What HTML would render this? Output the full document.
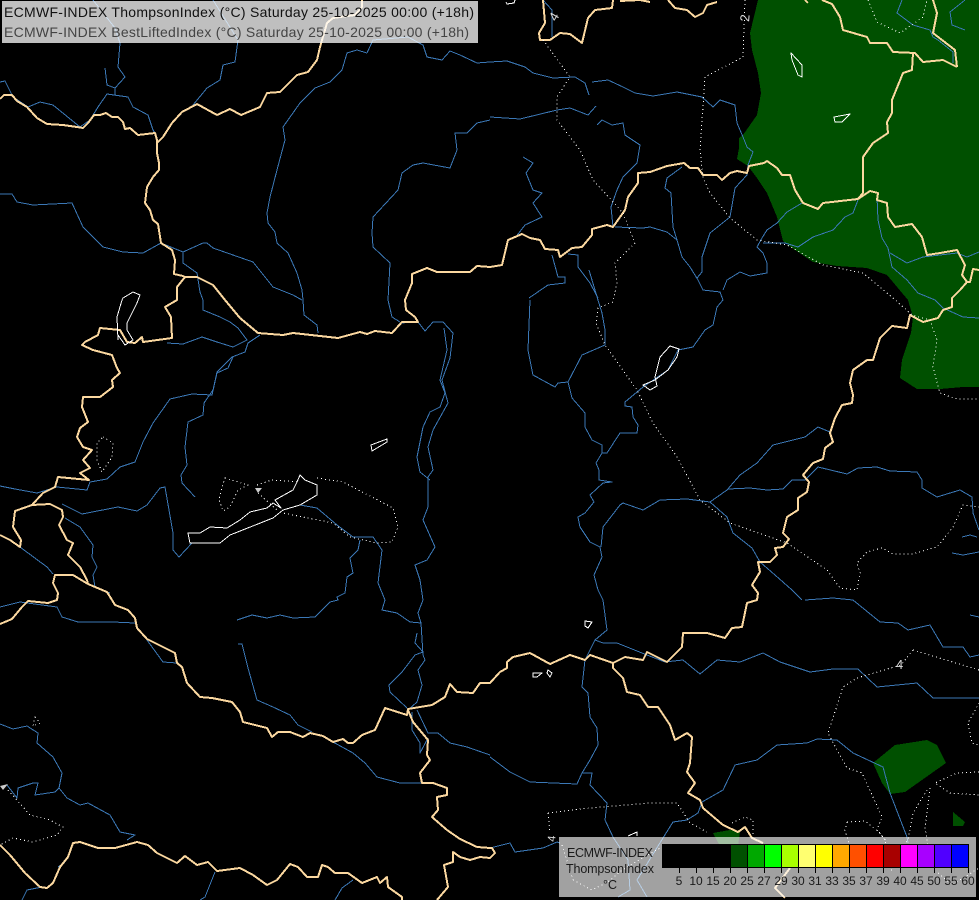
<!DOCTYPE html>
<html><head><meta charset="utf-8"><style>
html,body{margin:0;padding:0;background:#000;width:979px;height:900px;overflow:hidden}
svg{display:block}
text{font-family:"Liberation Sans",sans-serif}
</style></head><body>
<svg width="979" height="900" viewBox="0 0 979 900" xmlns="http://www.w3.org/2000/svg">
<rect width="979" height="900" fill="#000"/>
<g fill="#005000" shape-rendering="crispEdges">
<polygon points="758,0 750,33 752,50 758,73 761,93 757,115 743,135 739,138 739,148 737,159 748,166 757,178 767,193 777,217 783,241 795,250 813,262 837,266 867,268 887,275 908,300 913,317 911,333 902,360 900,378 917,389 940,389 963,387 979,387 979,0"/>
<polygon points="873,763 895,745 927,740 937,745 946,763 905,792 890,794 882,783"/>
<polygon points="953,812 965,822 963,826 953,826"/>
<polygon points="713,833 730,830 740,832 738,846 720,846"/>
</g>
<g fill="none" shape-rendering="crispEdges" stroke-linejoin="round">
<path stroke="#3b78b6" stroke-width="1" d="
M0,82L5,81L13,97L28,107L40,102L53,105L80,127L90,120L98,107L107,94L128,97L133,107L148,115L153,130L155,133
M105,68L107,85L115,88L125,77L118,67L120,43L115,28L93,0M115,88L115,95
M193,105L207,88L220,80L223,65L235,62L238,40L213,0
M367,53L373,40L408,37L423,45L427,57L442,60L450,51L460,55L477,63L490,62L507,61L525,67L533,73L553,78L575,77L585,83L589,95
M367,53L357,50L347,53L342,70L330,82L315,88L300,103L283,127L285,140L277,170L270,197L267,213L268,223L275,232L277,243L288,253L297,273L302,290L303,300L304,315L317,325L318,333
M490,120L477,123L467,133L455,133L457,150L450,168L423,163L413,165L402,173L398,190L373,217L372,233L373,247L390,263L388,300L392,317L400,322
M0,194L12,194L17,202L33,205L72,203L83,227L103,247L123,252L143,253L161,243L183,252L203,243L207,243L213,248L233,255L253,262L273,287L293,295L302,300
M183,252L183,263L197,273L200,292L203,300L203,310L220,317L230,322L238,328L247,340L233,347L217,342L202,337L183,344L167,343
M260,335L248,343L245,352L232,357L217,372L213,390L204,403L203,415L188,422L185,447L187,465L181,475L182,483L195,497
M233,357L228,368L217,373L212,395L192,394L170,399L153,423L143,442L135,462L120,467L107,479L90,482L87,490L57,487L37,493L15,489L0,486
M62,504L82,514L118,507L137,511L147,505L160,488L165,487L173,533L173,550L179,557L192,543
M65,518L80,527L93,545L92,557L97,567L93,575L95,587L110,593
M20,547L47,567L53,574
M400,323L418,322L425,331L433,322L443,322L453,333L450,358L442,380L448,403L433,430L428,447L433,470L428,477L428,507L423,520L435,547L427,560L415,565L420,580L423,600L418,613L421,623L423,655L425,660L418,670L422,685L417,702L408,710
M445,393L440,407L430,412L423,427L417,457L420,472L430,480M444,328L447,350L440,380L445,393
M417,633L415,643L423,652L415,655L402,672L389,685L390,692L407,708
M300,505L317,508L337,525L353,537L373,537L382,550L378,583L385,600L382,610L397,613L410,622L421,623
M360,540L358,550L350,558L353,573L347,577L345,593L337,597L338,600L330,602L325,607L315,617L293,618L280,615L267,618L252,615L237,620
M238,644L242,644L248,668L257,700L273,707L290,715L298,725L312,732
M0,607L20,602L57,607L62,617L78,622L113,622L135,623M147,640L163,662L177,663
M0,724L13,729L27,726L38,733L37,743L53,757L62,773L59,788L67,798L80,805L88,803L110,815L120,832L135,835L127,840
M7,785L17,798L18,788L33,783L38,783L35,795L55,792L59,788
M333,742L353,753L365,763L377,777L400,783L433,783
M412,712L412,730L420,743L420,753L428,738M417,710L428,733L438,733L450,743L467,747L490,755
M215,872L205,897L200,900M22,900L27,890L42,887M58,867L65,862M353,880L342,888L335,900
M552,255L558,277L565,277L565,283L548,285L529,298
M568,254L578,255L578,267L590,283L598,298
M490,117L520,119L557,110L570,108L588,115L596,106
M597,125L602,120L612,125L623,123L625,135L640,145L637,163L623,177L617,190L611,207L613,227
M523,157L533,163L526,173L533,190L542,193L533,203L542,217L525,225L515,238
M682,167L667,178L665,188L671,193L673,227L677,240L682,257L690,267L698,280L703,290L720,292L723,300
M747,175L735,188L730,217L710,233L702,257L702,272L697,278
M615,227L643,228L650,227L667,232L677,240
M592,82L608,80L623,87L635,93L653,96L677,92L702,97L713,107L720,100L735,105L737,123L743,137L747,147L753,152L748,165L747,175
M723,290L727,280L740,272L750,276L767,273L767,263L763,253L757,247L762,238L767,230L777,223L787,212L802,203
M763,243L785,243L798,247L813,237L833,230L845,217L853,213L858,200
M877,197L878,220L882,238L888,248L892,267L907,280L918,293L935,300L943,308L963,317L979,318
M890,253L907,263L923,257L957,253L967,257L979,252
M902,0L897,13L913,25L930,30L933,37L938,40L953,52L953,63
M965,0L950,12L952,25L965,30M543,0L552,10L552,37
M530,300L528,350L533,375L555,387L558,383L568,382L582,355L605,345L605,330L602,313L598,300L589,270
M568,382L572,398L585,413L585,427L592,440L602,445L602,453L607,453L620,433L637,433L638,425L633,417L632,407L625,406L625,402L643,387L668,370L678,350L693,347L705,330L713,325L717,307L723,300
M602,453L596,463L599,470L599,480L612,482L603,483L590,495L594,502L585,513L578,517L580,527L590,542L600,547L602,557L594,575L598,590L603,600L607,630L595,640L585,660L582,687L588,693L590,717L597,728L598,745L590,760L582,773
M601,547L603,527L620,505L623,503L643,510L660,500L687,499L710,502L727,490L740,475L757,463L773,445L805,437L818,427L830,432
M728,489L750,488L767,490L783,489L792,480L805,480L818,467L847,474L858,468L877,467L890,471L917,472L922,480L922,488L937,497L960,490L972,497L973,513L979,530
M710,502L727,517L733,533L752,548L760,562L775,575L792,590L802,600M805,600L833,598L853,600L880,622L898,623L908,630L930,625L943,647L963,647L970,657L979,655
M952,553L963,555L979,552M962,537L970,535L977,537
M595,640L603,643L617,643L647,655L665,662L683,660L700,674L717,660L740,662L763,653L780,662L810,672L833,669L858,669L877,687L917,683L933,698L979,698
M490,757L510,772L530,782L577,784L582,773L592,773L590,785L607,803L605,820L613,837L628,860L630,890L618,897
M490,848L510,843L515,852L543,848L557,842L560,843
M702,802L723,790L735,765L757,760L777,745L807,743L817,739L837,740L853,753L883,767L890,793L907,837
M702,802L698,813L687,820L673,822L663,838L637,880L647,897"/>
<path stroke="#3b78b6" stroke-width="1" d="M970,615L979,617M907,837L908,843"/>
<path stroke="#fbd8a0" stroke-width="2" d="
M0,99L4,95L12,95L17,101L27,107L37,118L47,124L63,125L77,127L83,128L88,123L94,115L100,115L106,113L112,117L118,117L123,122L125,129L130,128L138,135L155,133L157,140L157,153L159,163L159,170L153,177L147,187L145,203L150,210L153,220L158,224L161,243L172,250L175,260L174,274L183,276L185,277L197,277L213,285L225,300L240,318L258,333L283,335L293,333L338,338L360,332L367,334L375,331L392,333L402,322L418,322L415,317L406,310L405,300L412,283L412,274L427,268L437,272L470,272L477,266L490,267L502,265L508,240L522,234L530,238L540,240L545,249L558,250L560,257L572,248L582,247L592,235L592,229L607,225L613,227L625,210L628,197L638,183L638,173L650,172L667,166L684,163L690,168L698,168L703,175L717,175L722,180L730,173L737,171L747,173L749,166L764,163L767,161L777,168L782,175L790,175L795,190L803,203L818,209L823,203L858,199L870,191L878,193L877,200L887,203L888,217L895,227L912,224L922,237L927,255L940,253L957,250L965,265L962,275L967,282L960,290L952,298L952,307L943,310L938,318L923,322L910,315L907,328L892,326L880,338L873,360L867,360L853,370L850,383L853,395L852,403L842,405L835,418L830,433L833,442L825,448L823,459L813,463L803,475L809,482L807,492L798,498L798,510L787,517L783,533L789,539L783,547L775,548L777,555L770,562L758,562L760,572L752,585L758,593L757,600L747,603L742,627L732,628L725,638L707,633L683,633L682,647L667,662L647,652L643,660L625,657L613,663L590,655L585,660L570,655L550,664L530,653L513,657L507,662L507,668L500,672L490,683L480,683L473,693L457,692L450,684L445,697L432,705L420,707L408,709L407,715L385,708L375,730L362,735L353,743L348,743L343,739L333,742L323,736L310,733L303,737L290,732L278,732L272,737L267,728L243,722L240,712L232,702L212,698L200,697L187,683L182,667L177,663L175,653L147,639L137,628L135,618L128,610L115,605L112,600L107,592L88,584L87,580L80,567L68,555L73,543L67,540L59,525L63,517L62,510L50,504L32,505L15,511L13,527L21,540L20,547L10,540L0,535
M157,143L163,137L172,123L182,112L197,104L217,115L230,109L241,115L260,107L267,93L280,92L297,75L308,72L317,60L320,47L327,23L333,18L355,15L362,7L362,0
M185,277L177,287L177,300L165,307L171,317L172,338L143,342L142,337L135,343L127,342L120,330L100,328L98,335L85,342L82,345L93,350L112,355L117,368L120,373L112,380L113,387L100,397L83,397L82,407L88,422L80,428L77,437L83,447L92,450L83,460L90,468L80,473L89,480L58,477L55,487L43,493L32,505
M88,584L73,575L55,575L53,583L58,593L57,600L48,603L28,601L22,607L12,619L0,624
M0,845L10,855L25,873L40,887L47,888L53,883L60,867L68,857L73,843L80,842L98,848L115,848L137,842L148,845L157,853L177,863L185,856L197,865L208,862L213,867L217,871L240,868L253,875L267,885L277,880L290,864L298,867L307,877L318,877L322,865L328,867L335,873L348,873L362,883L377,877L380,883L387,877L388,887L402,897L402,900
M408,710L413,722L428,740L427,755L430,760L420,773L422,783L433,783L447,788L447,795L437,797L438,810L432,817L447,830L460,839L477,847L490,848L492,848L495,853L490,858L480,857L470,860L460,857L453,852L453,862L444,865L448,887L437,900
M613,663L613,668L623,678L627,692L640,695L648,707L658,707L670,725L675,740L687,733L692,737L690,763L687,772L695,783L688,793L700,800L703,808L723,825L738,832L745,827L752,838L763,843M790,868L775,888L785,898
M822,0L832,4L840,17L843,30L867,37L870,43L887,43L893,52L915,53L923,62L943,60L957,67
M913,53L912,70L903,73L892,100L892,113L887,122L888,133L873,143L863,157L863,193L858,199
M933,0L937,13L933,33L942,40L955,50L957,67
M967,282L970,282L973,269L979,270
M805,0L808,3
M543,0L545,23L539,33L540,40L550,40L560,33L570,34L582,43L588,18L595,10L612,8L613,0
M620,1L640,0L650,2M668,0L675,8L687,10L695,17L703,13L707,5L717,2"/>
<path stroke="#fff" stroke-width="1" d="
M188,533L200,533L210,527L227,528L240,520L250,512L267,508L273,503L281,508L275,500L293,490L297,482L300,475L305,480L317,485L317,495L300,505L283,510L273,518L230,535L220,543L190,543Z
M371,445L387,439L387,442L372,451Z
M118,340L117,317L122,300L123,298L133,292L140,295L137,303L127,323L127,330L133,340L125,345L118,335
M670,346L679,349L677,357L668,370L655,380L643,385L650,390L657,386L655,377L660,357Z
M791,53L802,65L802,77L798,75L792,60Z
M834,117L850,114L842,122L835,122Z
M585,621L592,622L588,628L585,626Z
M533,673L542,673L537,677L533,677Z
M548,670L552,673L550,677L547,673Z
M628,836L637,832L637,836
M506,2L507,4L514,3L515,0"/>
<path stroke="#fff" stroke-width="1" stroke-dasharray="1 3" d="
M745,0L743,57L705,77L700,150L703,177L710,193L730,218L757,240L787,245L823,265L863,273L893,298L912,315L930,320L937,340L933,367L940,393L957,399L979,399
M543,40L570,77L557,97L557,120L580,150L593,180L623,213L635,243L615,263L617,283L613,302L598,308L596,323L605,345L637,390L653,423L677,457L700,500L730,523L787,543L827,570L840,588L857,590L860,573L857,563L867,552L882,548L893,554L912,554L937,547L953,527L963,505L979,507
M868,0L877,22L900,33L923,17L927,0
M103,437L113,443L112,457L102,472L97,460L97,443Z
M225,478L248,485L238,490L230,507L223,511L219,500L222,487Z
M257,485L272,480L300,482M317,478L343,482L393,508L398,527L392,542L377,543L350,537L333,523L283,513
M258,493L277,510
M35,717L40,723L33,726Z
M8,790L17,800L30,815L50,820L63,827L57,835L33,842L13,838L0,845
M913,650L901,665L857,678L843,687L828,733L837,750L847,768L862,773L882,817L877,830L887,842
M913,650L979,670
M979,703L968,723L972,743L979,745
M979,772L957,773L935,783L950,793L979,795
M930,788L925,827L927,840L929,868M927,790L913,813L908,840L885,868
M847,822L865,821L880,833L885,840L892,872M847,822L845,830L848,840L852,860
M548,813L590,808L650,803L677,803L690,823L707,832
M732,823L745,817L753,820L753,837
M548,813L550,833
M573,880L592,890L608,882L622,870L660,848M562,845L573,880M938,873L952,885L968,875L979,868"/>
</g>
<g fill="#ddd" font-size="13">
<text transform="translate(749,22) rotate(-85)">2</text>
<text transform="translate(556,22) rotate(-60)">4</text>
<text x="896" y="669">4</text>
<text transform="translate(555,842) rotate(-85)" font-size="11">4</text>
</g>
<polygon points="255,488 262,488 258,493" fill="#ccc"/>
<polygon points="0,786 8,784 3,790" fill="#ccc"/>
<!-- header panel -->
<rect x="2" y="1" width="476" height="42" fill="#fff" fill-opacity=".75"/>
<text x="4" y="17" font-size="14" fill="#111" textLength="470" lengthAdjust="spacing">ECMWF-INDEX ThompsonIndex (°C) Saturday 25-10-2025 00:00 (+18h)</text>
<text x="4" y="37" font-size="14" fill="#444" textLength="465" lengthAdjust="spacing">ECMWF-INDEX BestLiftedIndex (°C) Saturday 25-10-2025 00:00 (+18h)</text>
<!-- legend -->
<rect x="559" y="837" width="417" height="60" fill="#fff" fill-opacity=".63"/>
<g font-size="12.5" fill="#1a1a1a" text-anchor="middle">
<text x="610" y="857" textLength="86" lengthAdjust="spacing">ECMWF-INDEX</text>
<text x="610" y="873" textLength="88" lengthAdjust="spacing">ThompsonIndex</text>
<text x="610" y="889">°C</text>
</g>
<g shape-rendering="crispEdges">
<rect x="662" y="844" width="68" height="23" fill="#000"/>
<rect x="730" y="844" width="17" height="23" fill="#005000"/>
<rect x="747" y="844" width="17" height="23" fill="#00a800"/>
<rect x="764" y="844" width="17" height="23" fill="#00ff00"/>
<rect x="781" y="844" width="17" height="23" fill="#a8ff00"/>
<rect x="798" y="844" width="17" height="23" fill="#ffff70"/>
<rect x="815" y="844" width="17" height="23" fill="#ffff00"/>
<rect x="832" y="844" width="17" height="23" fill="#ffa800"/>
<rect x="849" y="844" width="17" height="23" fill="#ff5000"/>
<rect x="866" y="844" width="17" height="23" fill="#ff0000"/>
<rect x="883" y="844" width="17" height="23" fill="#a80000"/>
<rect x="900" y="844" width="17" height="23" fill="#ff00ff"/>
<rect x="917" y="844" width="17" height="23" fill="#a800ff"/>
<rect x="934" y="844" width="17" height="23" fill="#5000ff"/>
<rect x="951" y="844" width="17" height="23" fill="#0000ff"/>
<path fill="none" stroke="#000" stroke-width="1" d="M662.5,844.5H968.5V867.5H662.5ZM730.5,844V867M747.5,844V867M764.5,844V867M781.5,844V867M798.5,844V867M815.5,844V867M832.5,844V867M849.5,844V867M866.5,844V867M883.5,844V867M900.5,844V867M917.5,844V867M934.5,844V867M951.5,844V867
M679.5,867V873M696.5,867V873M713.5,867V873M730.5,867V873M747.5,867V873M764.5,867V873M781.5,867V873M798.5,867V873M815.5,867V873M832.5,867V873M849.5,867V873M866.5,867V873M883.5,867V873M900.5,867V873M917.5,867V873M934.5,867V873M951.5,867V873M968.5,867V873"/>
</g>
<g font-size="12" fill="#1a1a1a" text-anchor="middle">
<text x="679" y="885">5</text><text x="696" y="885">10</text><text x="713" y="885">15</text><text x="730" y="885">20</text><text x="747" y="885">25</text><text x="764" y="885">27</text><text x="781" y="885">29</text><text x="798" y="885">30</text><text x="815" y="885">31</text><text x="832" y="885">33</text><text x="849" y="885">35</text><text x="866" y="885">37</text><text x="883" y="885">39</text><text x="900" y="885">40</text><text x="917" y="885">45</text><text x="934" y="885">50</text><text x="951" y="885">55</text><text x="968" y="885">60</text>
</g>
</svg>
</body></html>
